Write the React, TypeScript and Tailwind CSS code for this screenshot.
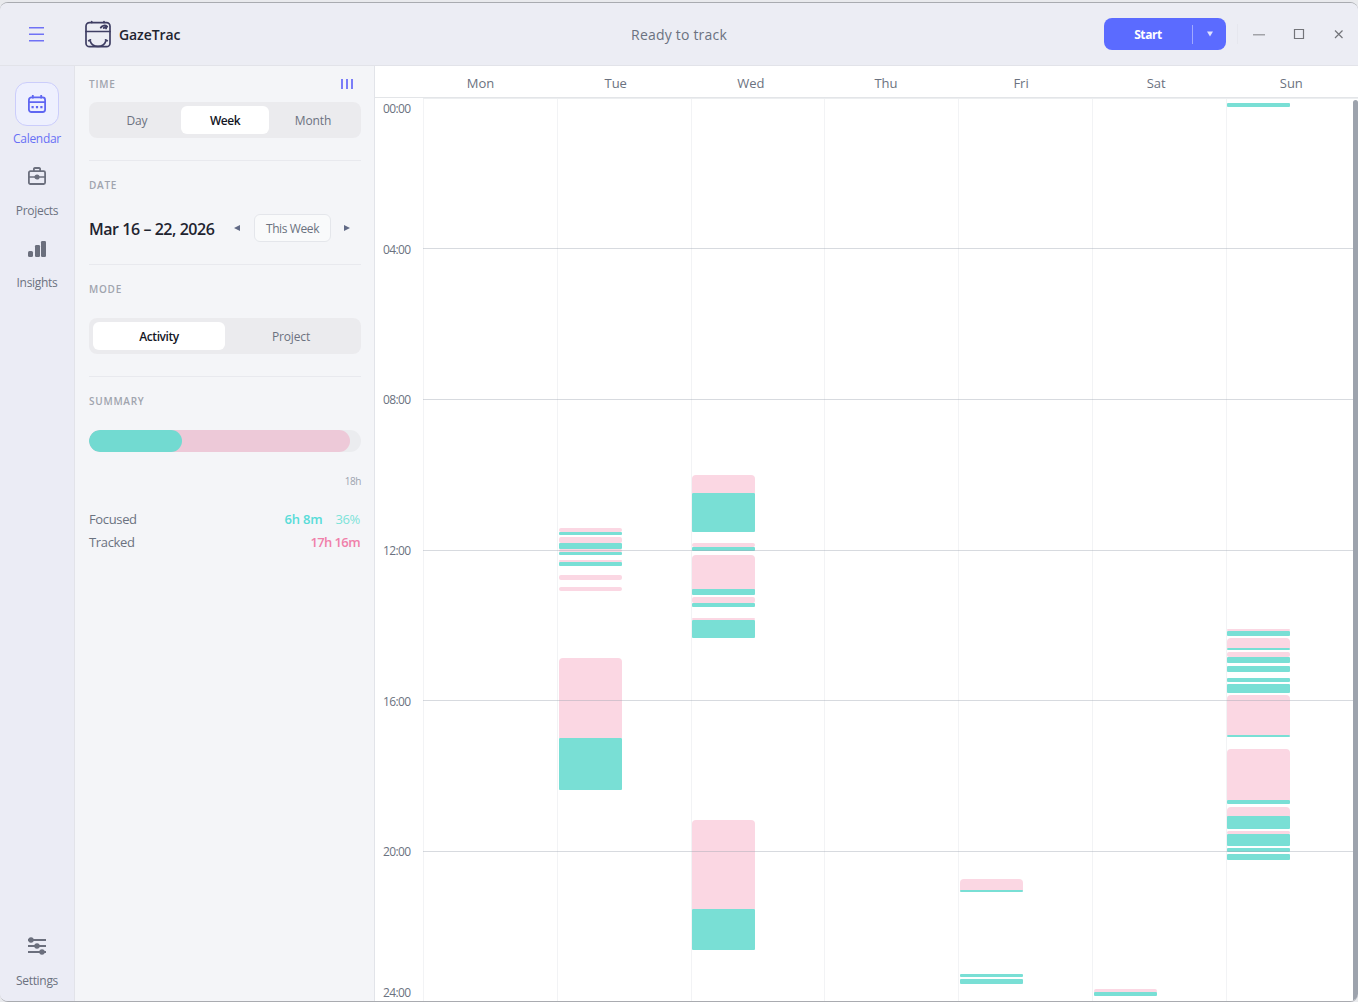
import { clsx } from "clsx";

const HOUR_PX = 37.67;
const HOUR_LINES = [4, 8, 12, 16, 20];
const DAYS = ["Mon", "Tue", "Wed", "Thu", "Fri", "Sat", "Sun"];

type Kind = "tracked" | "focused";

// [kind, top, height] in px from midnight
type Block = [Kind, number, number];

const BLOCKS: Record<string, Block[]> = {
  Tue: [
    ["tracked", 430, 4],
    ["focused", 433.5, 3.5],
    ["tracked", 439, 6],
    ["focused", 445, 5.5],
    ["tracked", 450.5, 3],
    ["focused", 453.5, 3],
    ["tracked", 462, 2],
    ["focused", 463.5, 4.5],
    ["tracked", 477, 5],
    ["tracked", 489, 4],
    ["tracked", 559.5, 80.5],
    ["focused", 640, 52],
  ],
  Wed: [
    ["tracked", 377, 18],
    ["focused", 395, 39.4],
    ["tracked", 444.5, 4.5],
    ["focused", 449, 3.5],
    ["tracked", 457, 34.5],
    ["focused", 491, 5.5],
    ["tracked", 499, 6],
    ["focused", 504.5, 4.5],
    ["tracked", 520, 2],
    ["focused", 521.5, 18],
    ["tracked", 722.4, 88.6],
    ["focused", 811, 41],
  ],
  Fri: [
    ["tracked", 781, 11.5],
    ["focused", 792, 2],
    ["focused", 875.5, 3.5],
    ["focused", 880.5, 5.8],
  ],
  Sat: [
    ["tracked", 891, 4],
    ["focused", 894, 4.4],
  ],
  Sun: [
    ["focused", 5, 3.5],
    ["tracked", 531, 2],
    ["focused", 532.5, 5.9],
    ["tracked", 540, 10],
    ["focused", 550, 1.8],
    ["tracked", 554, 5],
    ["focused", 559, 5.5],
    ["focused", 567.5, 6],
    ["focused", 580.4, 3.6],
    ["focused", 586.4, 8.5],
    ["tracked", 597, 39.5],
    ["focused", 636.5, 2],
    ["tracked", 651, 51],
    ["focused", 702, 4.3],
    ["tracked", 708.5, 10],
    ["focused", 718, 13],
    ["tracked", 733, 3],
    ["focused", 736, 11.5],
    ["focused", 750, 3.5],
    ["focused", 756, 6],
  ],
};

export default function App() {
  return (
    <div className="h-[1002px] w-[1358px] overflow-hidden bg-[#e9eaed] pt-[2px] font-['Open_Sans','Noto_Sans',sans-serif] text-[#6b7280]">
      <div className="flex h-[1000px] flex-col overflow-hidden rounded-lg border-y border-[#a9abb0] bg-[#ecedf5]">
        <TitleBar />
        <div className="flex min-h-0 flex-1">
          <NavRail />
          <FilterPanel />
          <WeekCalendar />
        </div>
      </div>
    </div>
  );
}

function TitleBar() {
  return (
    <header className="grid h-[63px] shrink-0 grid-cols-[1fr_auto_1fr] items-center border-b border-[#e2e3e9] bg-[#ecedf4]">
      <div className="flex items-center">
        <button className="ml-[29px] w-[15px]" aria-label="Menu">
          <svg width="15" height="16" viewBox="0 0 15 16" stroke="#7072f5" strokeWidth="1.5">
            <path d="M0 1.800h15M0 8.300h15M0 14.800h15" />
          </svg>
        </button>
        <Logo />
        <h1 className="ml-2 pt-px text-[14px] font-semibold tracking-[-0.1px] text-[#1f2430]">GazeTrac</h1>
      </div>
      <p className="pt-px text-[14px] tracking-[0.2px]">Ready to track</p>
      <div className="flex items-center justify-end">
        <div className="flex h-8 w-[122px] items-center rounded-lg bg-[#5b6bff] text-white">
          <button className="w-[88px] pt-px text-center text-[12px] font-bold tracking-[-0.4px]">Start</button>
          <span className="h-[19px] w-px bg-[#a0a9ff]" />
          <button className="flex flex-1 justify-center" aria-label="Start options">
            <svg width="6" height="6" viewBox="0 0 6 6" fill="#dfe2ff">
              <path d="M0 .5h6L3 5.5z" />
            </svg>
          </button>
        </div>
        <span className="ml-[11px] h-5 w-px bg-[#e6e7ee]" />
        <svg className="ml-[15px] mr-[13px]" width="92" height="12" viewBox="0 0 92 12" fill="none">
          <path d="M0 6.700h12" stroke="#a2a3a8" strokeWidth="1.4" />
          <path d="M41.500 1.500h9v9h-9z" stroke="#737479" strokeWidth="1.2" />
          <path d="M82 2.500l7.500 7.500M89.500 2.500l-7.500 7.500" stroke="#737479" strokeWidth="1.2" />
        </svg>
      </div>
    </header>
  );
}

function Logo() {
  return (
    <svg className="ml-[41px]" width="26" height="28" viewBox="0 0 26 28" fill="none" stroke="#3f3e63" strokeWidth="1.7" strokeLinecap="round">
      <rect x="1" y="2.7" width="24" height="24" rx="3.5" />
      <path d="M1 11.500h24M6.700 1.500v1M19 1.500v1" />
      <path d="M15.800 7.600c1.600-2.300 4.400-2.800 6.400-.9M18.800 8c.8-.9 1.800-.9 2.300.4" strokeWidth="1.9" />
      <path d="M3.700 20.700l1.800-.9M22.300 20.700l-1.800-.9M4.900 20.400c1.100 3.300 3.800 6 8.100 6s7-2.700 8.100-6" />
    </svg>
  );
}

function NavRail() {
  return (
    <nav className="flex w-[75px] shrink-0 flex-col items-center border-r border-[#e2e3e9] bg-[#ebecf5] pt-4 text-[12px] tracking-[-0.3px]">
      <div className="flex flex-col items-center text-[#6870f6]">
        <div className="flex size-11 items-center justify-center rounded-xl border border-[#cbcdfb] bg-[#eef0fe]">
          <svg width="18" height="18" viewBox="0 0 18 18" fill="none" stroke="#5f66f2" strokeWidth="1.8">
            <rect x=".9" y="2.4" width="16.2" height="14.6" rx="2.5" />
            <path d="M1 7.200h16M4.800 0v3.500M13.200 0v3.500" />
            <path d="M3.500 12.200h2.200M7.900 12.200h2.200M12.300 12.200h2.200" strokeWidth="2.2" />
          </svg>
        </div>
        <span className="mt-1 leading-[18px]">Calendar</span>
      </div>
      <NavItem label="Projects">
        <svg width="18" height="18" viewBox="0 0 18 18" fill="none" stroke="#6b6f7d" strokeWidth="1.8">
          <rect x=".9" y="4.2" width="16.2" height="12.8" rx="1.5" />
          <path d="M5.900 4V1.800a1 1 0 0 1 1-.8h4.200a1 1 0 0 1 1 .8V4" />
          <path d="M1 10h16" strokeWidth="1.3" />
          <circle cx="9" cy="10" r="1.7" fill="#6b6f7d" />
        </svg>
      </NavItem>
      <NavItem label="Insights">
        <svg width="18" height="18" viewBox="0 0 18 18" fill="#6b6f7d">
          <rect y="12" width="5" height="6" rx="1.5" />
          <rect x="7" y="6" width="5" height="12" rx="1.2" />
          <rect x="13" y="2" width="5" height="16" rx="1.2" />
        </svg>
      </NavItem>
      <div className="mt-auto pb-[11px]">
        <NavItem label="Settings">
          <svg width="18" height="18" viewBox="0 0 18 18" fill="#6b6f7d" stroke="#6b6f7d" strokeWidth="1.8">
            <path d="M0 3h18M0 9h18M0 15h18" />
            <circle cx="3" cy="3" r="1.8" />
            <circle cx="9" cy="9" r="1.8" />
            <circle cx="14" cy="15" r="1.8" />
          </svg>
        </NavItem>
      </div>
    </nav>
  );
}

function NavItem({ label, children }: { label: string; children: React.ReactNode }) {
  return (
    <div className="flex h-[72px] flex-col items-center justify-end">
      {children}
      <span className="mt-[17px] leading-[18px]">{label}</span>
    </div>
  );
}

function FilterPanel() {
  return (
    <aside className="flex w-[300px] shrink-0 flex-col border-r border-[#e2e4e9] bg-[#f4f5f8] pl-[14px] pr-[13px]">
      <section className="h-[95px] border-b border-[#e8e9ee] pt-[9px]">
        <div className="flex h-[18px] items-center justify-between">
          <SectionLabel>TIME</SectionLabel>
          <div className="mr-2 flex gap-[3px]">
            <span className="h-[10px] w-[2px] bg-[#7a7df8]" />
            <span className="h-[10px] w-[2px] bg-[#7a7df8]" />
            <span className="h-[10px] w-[2px] bg-[#7a7df8]" />
          </div>
        </div>
        <Segmented options={["Day", "Week", "Month"]} active="Week" className="mt-[9px]" />
      </section>

      <section className="h-[104px] border-b border-[#e8e9ee] pt-[15px]">
        <SectionLabel>DATE</SectionLabel>
        <div className="mt-5 flex h-7 items-center">
          <span className="w-[145px] whitespace-nowrap pt-0.5 text-[16px] font-semibold tracking-[-0.45px] text-[#1f2430]">
            Mar 16 – 22, 2026
          </span>
          <svg width="6" height="6" viewBox="0 0 6 6" fill="#616a86">
            <path d="M6 0v6L0 3z" />
          </svg>
          <button className="ml-[14px] h-7 w-[77px] rounded-md border border-[#e4e6eb] bg-[#f9fafb] pt-0.5 text-[12px] tracking-[-0.4px]">
            This Week
          </button>
          <svg className="ml-[13px]" width="6" height="6" viewBox="0 0 6 6" fill="#616a86">
            <path d="M0 0v6l6-3z" />
          </svg>
        </div>
      </section>

      <section className="h-[112px] border-b border-[#e8e9ee] pt-[15px]">
        <SectionLabel>MODE</SectionLabel>
        <Segmented options={["Activity", "Project"]} active="Activity" className="mt-5" />
      </section>

      <section className="pt-[15px]">
        <SectionLabel>SUMMARY</SectionLabel>
        <div className="mt-5 h-[22px] overflow-hidden rounded-full bg-[#ebecef]">
          <div className="h-full w-[261px] rounded-full bg-[#edc9d8]">
            <div className="h-full w-[93px] rounded-full bg-[#72dad1]" />
          </div>
        </div>
        <p className="mt-[21px] text-right text-[10px] leading-4 tracking-[-0.4px] text-[#9ca3af]">18h</p>
        <dl className="mt-[19px] text-[13px] leading-[23px] tracking-[-0.35px]">
          <div className="flex justify-between">
            <dt>Focused</dt>
            <dd className="flex gap-[13px] pr-px text-[#7ce3d8]">
              <span className="font-semibold tracking-[-0.2px] text-[#58dcd8]">6h 8m</span>
              <span>36%</span>
            </dd>
          </div>
          <div className="flex justify-between">
            <dt>Tracked</dt>
            <dd className="pr-px font-semibold tracking-[-0.6px] text-[#f080aa]">17h 16m</dd>
          </div>
        </dl>
      </section>
    </aside>
  );
}

function SectionLabel({ children }: { children: string }) {
  return (
    <h2 className="text-[10px] font-semibold leading-[18px] tracking-[0.75px] text-[#a0a4ae]">{children}</h2>
  );
}

function Segmented({ options, active, className }: { options: string[]; active: string; className: string }) {
  return (
    <div className={clsx("flex h-9 rounded-lg bg-[#ebebee] p-1", className)}>
      {options.map((option) => (
        <button
          key={option}
          className={clsx(
            "flex-1 rounded-md pt-0.5 text-[12px]",
            option === active ? "bg-white font-semibold tracking-[-0.45px] text-[#14161f]" : "tracking-[-0.15px]",
          )}
        >
          {option}
        </button>
      ))}
    </div>
  );
}

function WeekCalendar() {
  return (
    <main className="flex min-w-0 flex-1 flex-col bg-white">
      <div className="flex h-[32px] shrink-0 border-b border-[#e3e5e8] pl-[38px]">
        {DAYS.map((day) => (
          <div key={day} className="w-[135.14px] shrink-0 pt-[8px] text-center text-[13px] leading-[18px]">
            {day}
          </div>
        ))}
      </div>

      <div className="relative flex min-h-0 flex-1">
        <div className="w-12 shrink-0" />
        {DAYS.map((day) => (
          <div key={day} className="relative w-[133.8px] shrink-0 border-l border-[#f2f3f5]">
            {(BLOCKS[day] ?? []).map(([kind, top, height]) => (
              <div
                key={top}
                className={clsx(
                  "absolute left-[0.71px] w-[63px]",
                  kind === "focused" ? "rounded-[1px] bg-[#79dfd5]" : "bg-[#fbd7e3]",
                  kind === "tracked" && (height > 8 ? "rounded-t-[4px]" : "rounded-[2px]"),
                )}
                style={{ top, height }}
              />
            ))}
          </div>
        ))}

        {/* hour rules run over the blocks */}
        <div className="absolute top-0 right-0 left-12 h-px bg-[#eceef0]" />
        {HOUR_LINES.map((hour) => (
          <div
            key={hour}
            className="absolute right-0 left-12 h-px bg-[#9ca3af]/40"
            style={{ top: Math.round(hour * HOUR_PX - 0.3) }}
          />
        ))}
        {[0, ...HOUR_LINES, 24].map((hour) => (
          <span
            key={hour}
            className="absolute left-2 text-[12px] leading-[18px] tracking-[-0.65px]"
            style={{ top: Math.min(Math.max(hour * HOUR_PX - 8, 2), 886) }}
          >
            {String(hour).padStart(2, "0")}:00
          </span>
        ))}
        <div className="absolute top-[2px] right-0 bottom-0 w-[5px] rounded-t bg-[#9da3ad]" />
      </div>
    </main>
  );
}
